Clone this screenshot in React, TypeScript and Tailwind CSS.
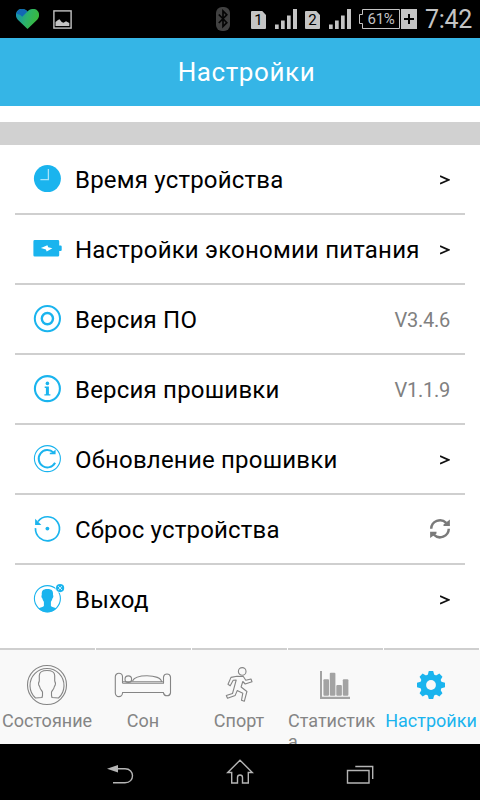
import type { ReactNode } from "react";

const BLUE = "#1ab4ee";

/* Row icons share a 40x40 box whose centre is the centre of the glyph. */
function RowIcon({ children }: { children: ReactNode }) {
  return (
    <svg viewBox="-20.4 -19.6 40 40" className="h-10 w-10 shrink-0 overflow-visible" fill="none" stroke={BLUE}>
      {children}
    </svg>
  );
}

const clockIcon = (
  <RowIcon>
    <circle r="13.5" fill={BLUE} stroke="none" />
    <path d="M1 -9.5V1H-7" stroke="#a9e3fa" strokeWidth="1.3" />
  </RowIcon>
);

const batteryIcon = (
  <RowIcon>
    <path d="M-13 -8.5H10.5Q11.8 -8.5 11.8 -7.2V-3H13.2Q14.3 -3 14.3 -2V1.3Q14.3 2.3 13.2 2.3H11.8V6.7Q11.8 8 10.5 8H-12.7Q-14 8 -14 6.7V-7.2Q-14 -8.5 -12.7 -8.5Z" fill={BLUE} stroke="none" />
    <path d="M-6.5 -0.7L0 -3.3L0.8 -1.4L5 -0.3L-0.7 3L-1.5 0.8Z" fill="#fff" stroke="none" />
  </RowIcon>
);

const targetIcon = (
  <RowIcon>
    <circle r="12.6" strokeWidth="2" />
    <circle r="5.6" strokeWidth="2.4" />
  </RowIcon>
);

const infoIcon = (
  <RowIcon>
    <circle r="12.5" strokeWidth="2.1" />
    <circle cy="-5.2" r="1.8" fill={BLUE} stroke="none" />
    <path d="M-2.7 -2H1.5V5.7H3V7H-3V5.7H-1.5V-0.7H-2.7Z" fill={BLUE} stroke="none" />
  </RowIcon>
);

const updateIcon = (
  <RowIcon>
    <circle r="13" strokeWidth="1.1" />
    <path d="M6 -6.2A8.7 8.7 0 1 0 7.7 4.2" strokeWidth="2" />
    <path d="M8.2 -9V-4.3H2.4V-5.8L5 -6Z" fill={BLUE} stroke="none" />
  </RowIcon>
);

const resetIcon = (
  <RowIcon>
    <path d="M-9.4 -7.2A12 12 0 1 1 -11.9 -0.5" strokeWidth="1.7" />
    <path d="M-12.3 -9.8V-3.5H-6Z" fill={BLUE} stroke="none" />
    <circle r="1.9" fill={BLUE} stroke="none" />
  </RowIcon>
);

const exitIcon = (
  <RowIcon>
    <circle cx="0" cy="0" r="13" strokeWidth="1.1" />
    <path d="M0 -9.6C4.7 -9.6 6 -7.6 5.6 -3.6C6.3 -3.2 6 -0.5 5 -0.2C4.6 1.6 4 2.5 3.5 3.2V7.5C4.5 8.7 7 8.5 9 10Q5 14 0 14Q-5 14 -9 10C-7 8.5 -4.5 8.7 -3.5 7.5V3.2C-4 2.5 -4.6 1.6 -5 -0.2C-6 -0.5 -6.3 -3.2 -5.6 -3.6C-6 -7.6 -4.7 -9.6 0 -9.6Z" fill={BLUE} stroke="none" />
    <circle cx="12.7" cy="-10.5" r="4.7" fill="#fff" stroke="none" />
    <circle cx="12.7" cy="-10.5" r="4.1" fill={BLUE} stroke="none" />
    <path d="M10.8 -12.4L14.6 -8.6M14.6 -12.4L10.8 -8.6" stroke="#d5f1fc" strokeWidth="1" />
  </RowIcon>
);

const chevron = (
  <svg viewBox="0 0 10 10" className="h-2.5 w-2.5" fill="none" stroke="#111" strokeWidth="1.7">
    <path d="M0 1L8.6 4.9L0 8.8" />
  </svg>
);

const syncIcon = (
  <svg viewBox="0 0 22 22" className="mt-[-2px] mr-[-1px] h-[22px] w-[22px] overflow-visible" fill="none" stroke="#7a7a7a" strokeWidth="2.5">
    <path d="M2.2 10.8A8.8 8.8 0 0 1 17.2 4.9" />
    <path d="M19.8 10.8A8.8 8.8 0 0 1 4.8 16.7" />
    <path d="M20.9 1.6V8H14.5V6.4Z" fill="#7a7a7a" stroke="none" />
    <path d="M1.1 20V13.8H7.5V15.4Z" fill="#7a7a7a" stroke="none" />
  </svg>
);

function Version({ children }: { children: ReactNode }) {
  return <span className="text-[20px] tracking-[-0.25px] text-[#808080]">{children}</span>;
}

const rows = [
  { label: "Время устройства", icon: clockIcon, end: chevron },
  { label: "Настройки экономии питания", icon: batteryIcon, end: chevron },
  { label: "Версия ПО", icon: targetIcon, end: <Version>V3.4.6</Version> },
  { label: "Версия прошивки", icon: infoIcon, end: <Version>V1.1.9</Version> },
  { label: "Обновление прошивки", icon: updateIcon, end: chevron },
  { label: "Сброс устройства", icon: resetIcon, end: syncIcon },
  { label: "Выход", icon: exitIcon, end: chevron },
];

/* Tab icons share a 60x44 box centred on the tab. */
function TabIcon({ children }: { children: ReactNode }) {
  return (
    <svg viewBox="-30 -22 60 44" className="h-11 w-[60px] overflow-visible" fill="none" stroke="#858585" strokeWidth="1.1" strokeLinejoin="round">
      {children}
    </svg>
  );
}

const tabs = [
  {
    label: "Состояние",
    icon: (
      <TabIcon>
        <circle r="19.5" />
        <path d="M-4.5 10.5L-5 12.5L-11.5 13A17 17 0 1 1 11.5 13L5 12.5L4.5 10.5V7C5.5 5 7 4 7.3 1.7C8.5 0 9 -2 7.7 -4V-9.5Q7.5 -14.5 0 -14.5Q-7.5 -14.5 -7.7 -9.5V-4C-9 -2 -8.5 0 -7.3 1.7C-7 4 -5.5 5 -4.5 7Z" />
      </TabIcon>
    ),
  },
  {
    label: "Сон",
    icon: (
      <TabIcon>
        <path d="M-20.5 -1.8H20.5V-8.2A3.6 3.6 0 0 1 27.5 -8.2V8A3.6 3.6 0 0 1 20.5 8V7.5H-20.5V8A3.6 3.6 0 0 1 -27.7 8V-8.2A3.6 3.6 0 0 1 -20.5 -8.2V-1.8" />
        <circle cx="-14.7" cy="-5.8" r="3.3" />
        <path d="M-20.5 -3.2H20.5M-10.5 -4C-9 -7.3 -3 -9.2 4 -9.2C12 -9.2 18.5 -7 18.5 -3.2" />
      </TabIcon>
    ),
  },
  {
    label: "Спорт",
    icon: (
      <TabIcon>
        <circle cx="3.2" cy="-13.6" r="3.8" />
        <path d="M-2 -8.7L-8 -7.6L-11 -0.7L-8.8 0.8L-5.8 -4.7L-2.8 -5L-5 3.2L-6.5 8.5L-12.7 10.5L-11.5 13.3L-3.8 10.4L-1.8 5.6L3.8 8.2L2.5 15.3L5.3 16.3L7.9 6.5L2.1 2L3.8 -3.5L6.2 -1L13 -3.2L12 -6L6.8 -4.7L4.3 -8.5Z" />
      </TabIcon>
    ),
  },
  {
    label: "Статистика",
    icon: (
      <TabIcon>
        <g fill="#a3a3a3" stroke="none" transform="translate(1 0)">
          <path d="M-16 -14H-14V11.8H14V14H-16Z" />
          <rect x="-12.6" y="-5.7" width="5.6" height="16.4" rx="1" />
          <rect x="-6.2" y="-12.2" width="5.6" height="22.9" rx="1" />
          <rect x="0.3" y="0" width="5.6" height="10.7" rx="1" />
          <rect x="6.8" y="-5.7" width="5.6" height="16.4" rx="1" />
        </g>
      </TabIcon>
    ),
  },
  {
    label: "Настройки",
    icon: (
      <TabIcon>
        <g stroke="none" fill={BLUE}>
          <circle r="10.8" />
          {[0, 45, 90, 135, 180, 225, 270, 315].map((a) => (
            <path key={a} d="M-3.4 -9.5L-2.2 -14H2.2L3.4 -9.5Z" transform={`rotate(${a})`} />
          ))}
          <circle r="4.9" fill="#f9f9f9" />
        </g>
      </TabIcon>
    ),
  },
];

function Signal() {
  return (
    <svg viewBox="0 0 22 20" className="h-5 w-[22px]" fill="#c4c4c4">
      <path d="M0 15.5H3.7V20H0ZM6 11.5H9.7V20H6ZM12 6.5H15.7V20H12ZM18 0H22V20H18Z" />
    </svg>
  );
}

function Sim({ n }: { n: string }) {
  return (
    <span className="flex h-[18px] w-[15px] items-center justify-center rounded-[1px] bg-[#c4c4c4] text-[15px] leading-none text-black [clip-path:polygon(0_0,75%_0,100%_22%,100%_100%,0_100%)]">
      {n}
    </span>
  );
}

function StatusBar() {
  return (
    <header className="flex h-[38px] shrink-0 items-center bg-black pl-4 text-[#c4c4c4]">
      <svg viewBox="0 0 23 20" className="h-5 w-[23px]">
        <defs>
          <linearGradient id="heart" x1="0" y1="0.2" x2="1" y2="0.5">
            <stop offset="0" stopColor="#1590b8" />
            <stop offset="0.5" stopColor="#2cb36a" />
            <stop offset="1" stopColor="#3cb936" />
          </linearGradient>
        </defs>
        <path d="M11.5 20L1.8 10.8C-1.8 7 0 1 4.5 0.1C7.5 -0.4 9.8 0.5 11.5 2.6C13.2 0.5 15.5 -0.4 18.5 0.1C23 1 24.8 7 21.2 10.8Z" fill="url(#heart)" />
        <path d="M0.7 5C1 2 3 0.2 5.5 0.1C8 -0.2 10 0.8 11.5 2.6L6.2 7.7C4 5.5 2 5 0.7 5Z" fill="#1268b5" />
      </svg>
      <svg viewBox="0 0 19 19" className="ml-3.5 h-[19px] w-[19px]" fill="none" stroke="#c4c4c4">
        <rect x="0.9" y="0.9" width="17.2" height="17.2" strokeWidth="1.4" />
        <path d="M2.5 16V12L5 10L6.5 9.3L8.7 12L10.5 12.7L13 11.3L16.3 13V16Z" fill="#c4c4c4" stroke="none" />
      </svg>
      <svg viewBox="0 0 14 24" className="ml-36 h-6 w-3.5" fill="none">
        <rect width="14" height="24" rx="6" fill="#414141" />
        <path d="M2.8 7.5L10.8 15.7L7 19.5V4L10.8 7.8L2.8 16" stroke="#050505" strokeWidth="1.7" />
      </svg>
      <div className="ml-[21px] flex items-center">
        <span className="mt-0.5 flex"><Sim n="1" /></span>
        <span className="ml-[9px] flex"><Signal /></span>
        <span className="mt-0.5 ml-2 flex"><Sim n="2" /></span>
        <span className="ml-[9px] flex"><Signal /></span>
      </div>
      <div className="ml-2 flex items-center">
        <div className="relative flex h-5 w-[41px] items-center justify-center pl-[3px]">
          <svg viewBox="0 0 41 20" className="absolute inset-0 h-5 w-[41px]" fill="none" stroke="#c4c4c4">
            <path d="M3.5 0.5H40.5V19.5H3.5V14.5H0.5V5.5H3.5Z" />
          </svg>
          <span className="text-[15px] leading-none tracking-[-0.3px]">61%</span>
        </div>
        <svg viewBox="0 0 16 20" className="ml-px h-5 w-4">
          <path d="M0 0H16V20H0Z" fill="#c4c4c4" />
          <path d="M3 10H13M8 5V15" stroke="#000" strokeWidth="2" />
        </svg>
      </div>
      <span className="ml-2 text-[25px] leading-none tracking-[-0.3px] whitespace-nowrap">7:42</span>
    </header>
  );
}

export default function App() {
  return (
    <div className="flex h-[800px] w-[480px] flex-col overflow-hidden bg-white font-[Roboto,sans-serif]">
      <StatusBar />
      <h1 className="flex h-[68px] shrink-0 items-center justify-center bg-[#35b5e6] pt-px pl-[13px] text-[26px] tracking-[0.6px] text-white">
        Настройки
      </h1>
      <div className="mt-4 h-[23px] shrink-0 bg-[#d1d1d1]" />
      <main className="flex-1 px-[15px]">
        {rows.map((row) => (
          <div key={row.label} className="flex h-[70px] items-center border-b-2 border-[#cfcfcf] pr-[15px] pl-3 last:border-transparent">
            {row.icon}
            <span className="ml-2 pt-px text-[24px] leading-none tracking-[0.2px] whitespace-nowrap text-black">{row.label}</span>
            <span className="ml-auto flex items-center pt-0.5">{row.end}</span>
          </div>
        ))}
      </main>
      <nav className="grid h-24 shrink-0 grid-cols-5 overflow-hidden bg-[#f9f9f9]">
        {tabs.map((tab, i) => (
          <div key={tab.label} className={`flex h-24 flex-col items-center overflow-hidden ${i === 4 ? "text-[#1ab4ee]" : "text-[#858585]"}`}>
            <div className="h-0.5 w-full shrink-0 border-r border-white bg-[#cfcfcf]" />
            <div className="mt-[13px] mr-[2px] flex shrink-0">{tab.icon}</div>
            <div className={`mt-[3px] w-full text-[18px] leading-[21px] break-all ${i === 3 ? "text-left" : "pr-[2px] text-center"}`}>
              {tab.label}
            </div>
          </div>
        ))}
      </nav>
      <footer className="flex h-14 shrink-0 items-center justify-center bg-black">
        <svg viewBox="0 0 320 56" className="h-14 w-80" fill="none" stroke="#b5b5b5" strokeWidth="1.4">
          <path d="M33 38.8H45C55 38.8 55 24.8 45 24.8H36" />
          <path d="M27 24.8L38 21V28.6Z" fill="#b5b5b5" stroke="none" />
          <path d="M160 16.2L172.3 28.5H168.3V39H162.5V33.5A2.5 2.5 0 0 0 157.5 33.5V39H151.7V28.5H147.7Z" />
          <path d="M187.5 26.5H209V39H187.5ZM195.3 22.5H212.7V35" transform="translate(80 0)" />
        </svg>
      </footer>
    </div>
  );
}
